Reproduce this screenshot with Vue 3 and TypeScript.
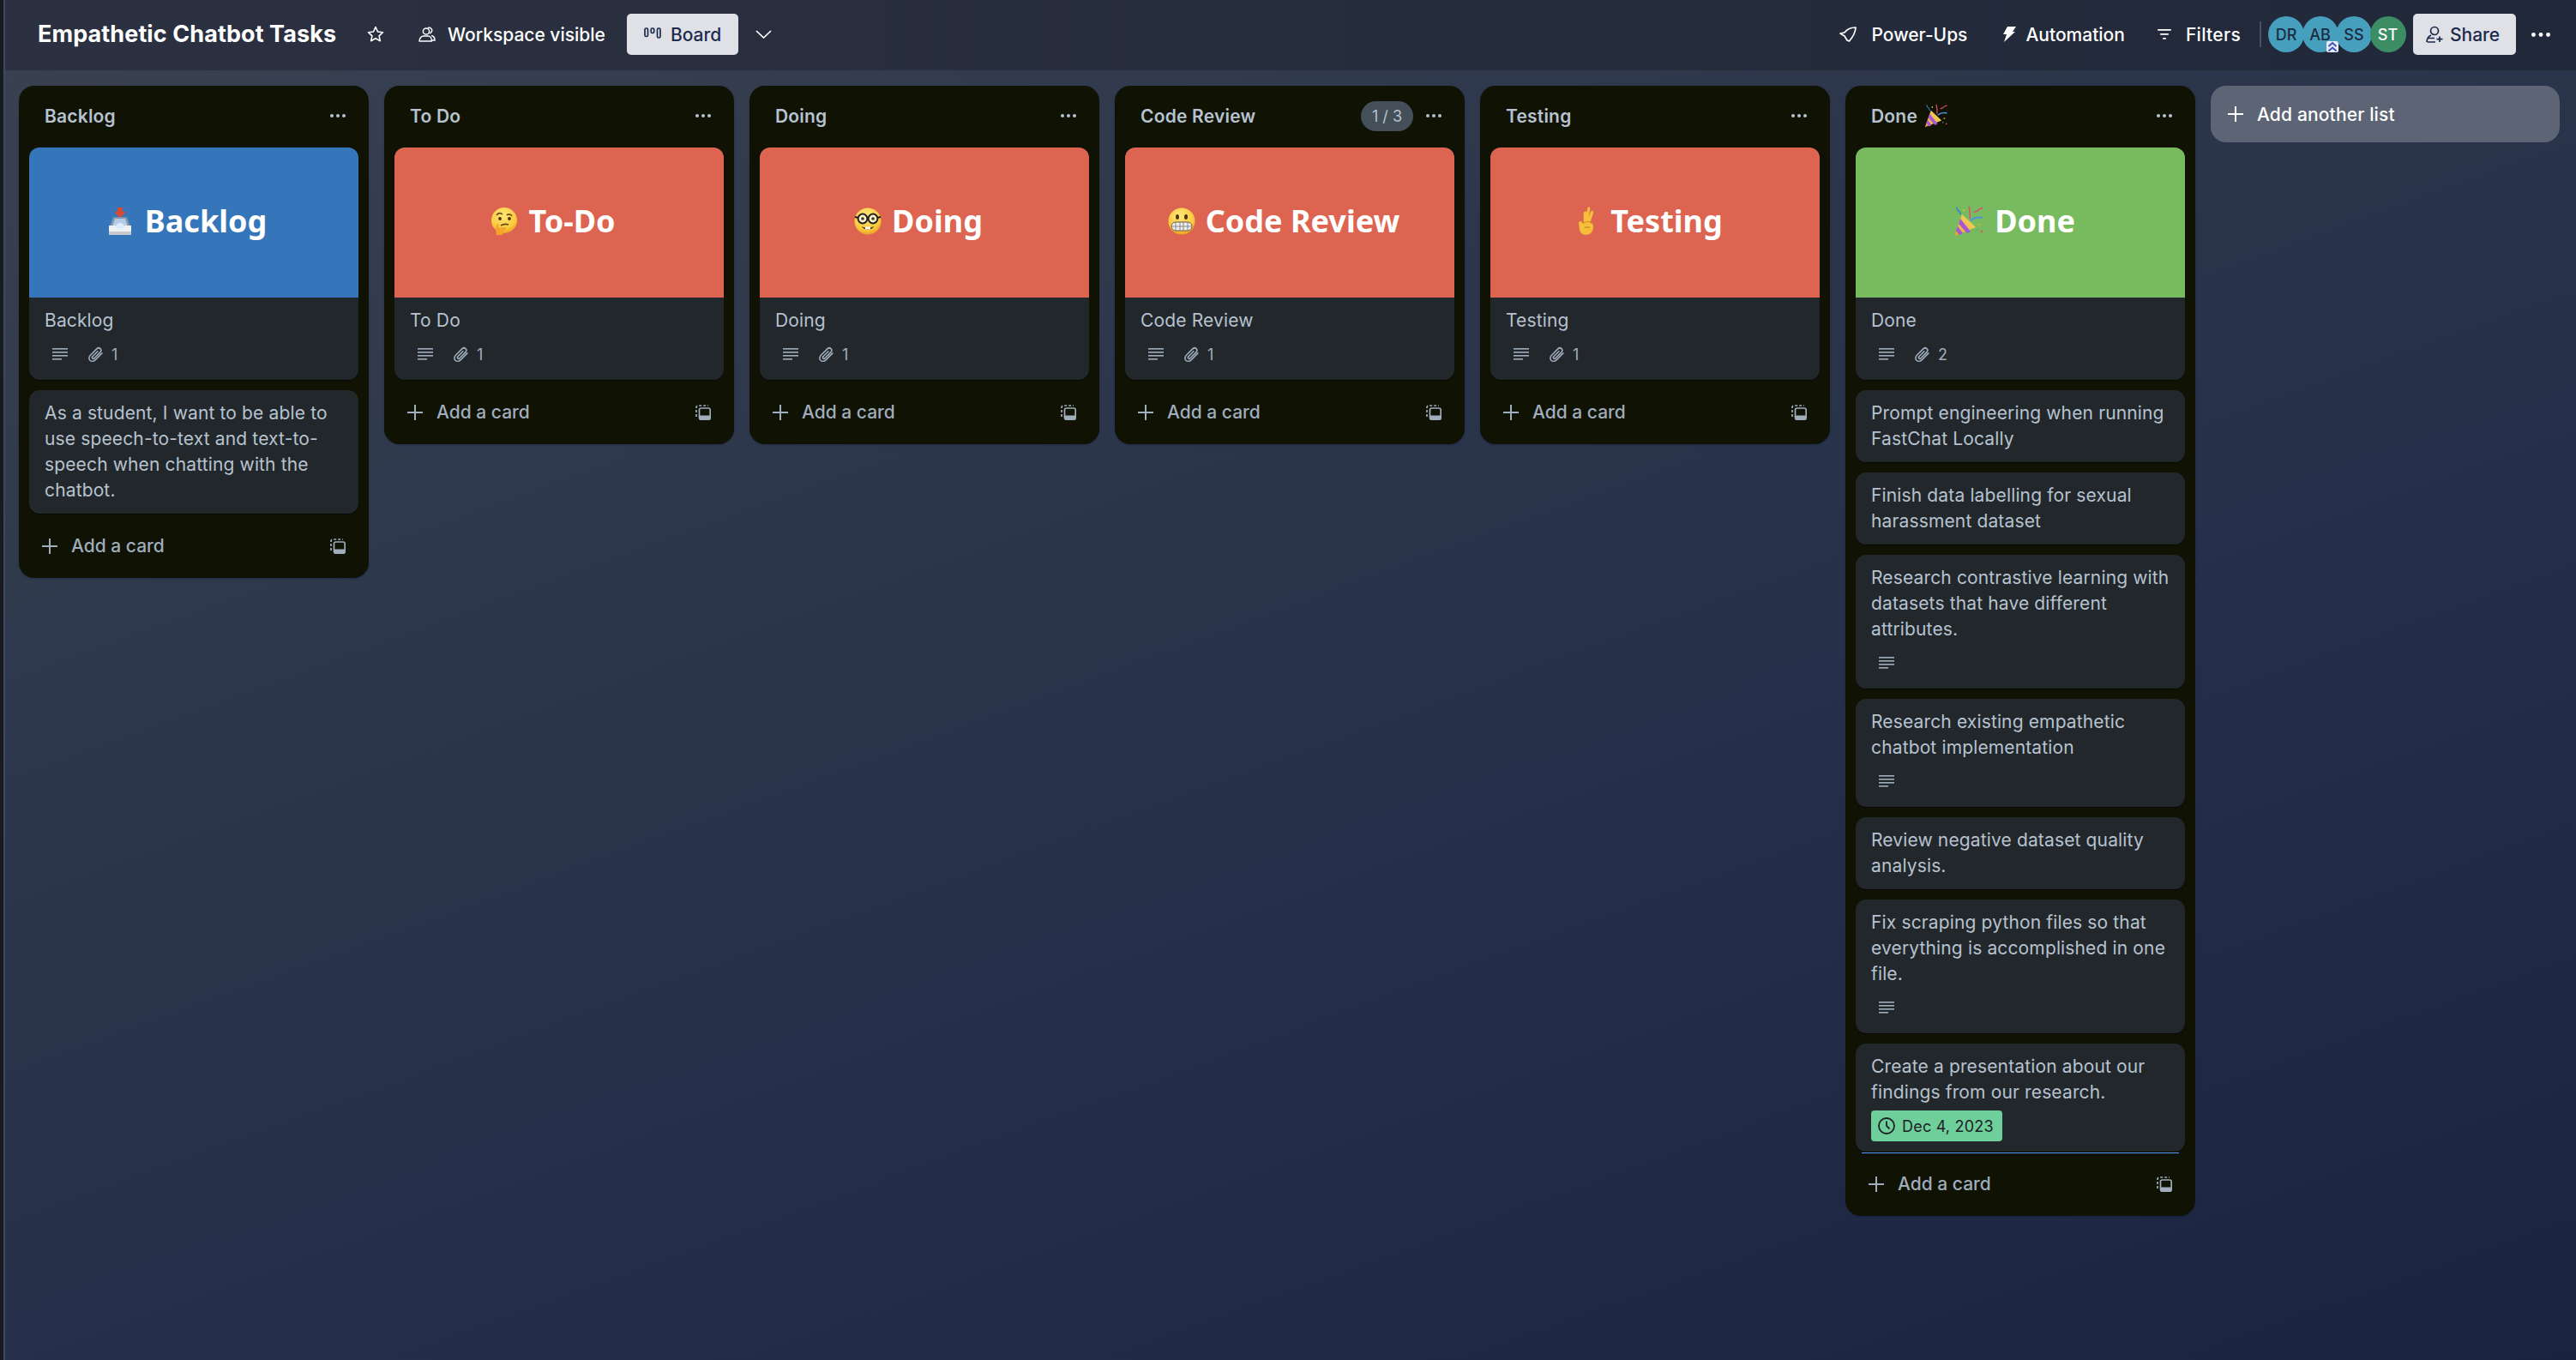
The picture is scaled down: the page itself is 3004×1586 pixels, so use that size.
<script setup lang="ts">
interface Card {
  text: string
  desc?: boolean
  attachments?: number
  date?: string
  cover?: { color: string; emoji: string; label: string }
}
interface List {
  name: string
  emoji?: string
  count?: string
  cards: Card[]
}

const RED = '#dc6450'

const lists: List[] = [
  {
    name: 'Backlog',
    cards: [
      { text: 'Backlog', desc: true, attachments: 1, cover: { color: '#3575ba', emoji: 'inbox', label: 'Backlog' } },
      { text: 'As a student, I want to be able to use speech-to-text and text-to-speech when chatting with the chatbot.' },
    ],
  },
  {
    name: 'To Do',
    cards: [{ text: 'To Do', desc: true, attachments: 1, cover: { color: RED, emoji: 'thinking', label: 'To-Do' } }],
  },
  {
    name: 'Doing',
    cards: [{ text: 'Doing', desc: true, attachments: 1, cover: { color: RED, emoji: 'nerd', label: 'Doing' } }],
  },
  {
    name: 'Code Review',
    count: '1 / 3',
    cards: [{ text: 'Code Review', desc: true, attachments: 1, cover: { color: RED, emoji: 'grimace', label: 'Code Review' } }],
  },
  {
    name: 'Testing',
    cards: [{ text: 'Testing', desc: true, attachments: 1, cover: { color: RED, emoji: 'fingers', label: 'Testing' } }],
  },
  {
    name: 'Done',
    emoji: 'party',
    cards: [
      { text: 'Done', desc: true, attachments: 2, cover: { color: '#77bb5e', emoji: 'party', label: 'Done' } },
      { text: 'Prompt engineering when running FastChat Locally' },
      { text: 'Finish data labelling for sexual harassment dataset' },
      { text: 'Research contrastive learning with datasets that have different attributes.', desc: true },
      { text: 'Research existing empathetic chatbot implementation', desc: true },
      { text: 'Review negative dataset quality analysis.' },
      { text: 'Fix scraping python files so that everything is accomplished in one file.', desc: true },
      { text: 'Create a presentation about our findings from our research.', date: 'Dec 4, 2023' },
    ],
  },
]

const members = [
  { initials: 'DR', color: '#46a0bd' },
  { initials: 'AB', color: '#46a0bd', admin: true },
  { initials: 'SS', color: '#46a0bd' },
  { initials: 'ST', color: '#3c8d63', light: true },
]
</script>

<template>
  <svg class="sprite" aria-hidden="true">
    <defs>
      <radialGradient id="face" cx="45%" cy="30%" r="75%">
        <stop offset="0" stop-color="#ffe678" />
        <stop offset="0.7" stop-color="#fbc93c" />
        <stop offset="1" stop-color="#e49a20" />
      </radialGradient>
      <linearGradient id="cone" x1="0" y1="1" x2="1" y2="0">
        <stop offset="0" stop-color="#e8a62c" />
        <stop offset="1" stop-color="#fbd96a" />
      </linearGradient>

      <symbol id="e-inbox" viewBox="0 0 26 32">
        <path d="M10 0h6v5h4l-7 7-7-7h4z" fill="#d8492f" />
        <path d="M5 11h16l4 11H1z" fill="#7f93ad" />
        <path d="M7 13h12l3 9H4z" fill="#b4cbe6" />
        <circle cx="13" cy="23" r="5" fill="#dcecff" />
        <path d="M0 21h8a5 4 0 0 0 10 0h8v10a1 1 0 0 1-1 1H1a1 1 0 0 1-1-1z" fill="#eef0f2" />
        <path d="M0 28h26v3a1 1 0 0 1-1 1H1a1 1 0 0 1-1-1z" fill="#c5c8cd" />
      </symbol>
      <symbol id="e-thinking" viewBox="0 0 32 32">
        <circle cx="16" cy="15" r="15" fill="url(#face)" />
        <path d="M7 9c2-3 5-3 7-1M19 9c2-2 5-1 6 1" stroke="#6b4a14" stroke-width="1.6" fill="none" />
        <circle cx="11" cy="13" r="1.9" fill="#4a3310" />
        <circle cx="22" cy="13" r="1.9" fill="#4a3310" />
        <path d="M12 21c3-2 6-2 9-1" stroke="#6b4a14" stroke-width="1.6" fill="none" />
        <path d="M7 32c-1-4-1-8 0-12l2-1 1 5 7-1c2 0 2 3 0 3l-2 1c1 3-1 5-4 5z" fill="#f2a42c" />
      </symbol>
      <symbol id="e-nerd" viewBox="0 0 32 32">
        <circle cx="16" cy="16" r="15.5" fill="url(#face)" />
        <circle cx="10" cy="13" r="5.4" fill="#fff3c4" stroke="#222" stroke-width="2" />
        <circle cx="22" cy="13" r="5.4" fill="#fff3c4" stroke="#222" stroke-width="2" />
        <path d="M15 12h2M1 11l4 1M27 12l4-1" stroke="#222" stroke-width="2" />
        <circle cx="10" cy="13" r="1.8" fill="#333" />
        <circle cx="22" cy="13" r="1.8" fill="#333" />
        <path d="M9 22c4 2 10 2 14 0-2 5-12 5-14 0z" fill="#5a3510" />
        <rect x="13" y="22.5" width="6" height="3" fill="#fff" />
      </symbol>
      <symbol id="e-grimace" viewBox="0 0 32 32">
        <circle cx="16" cy="16" r="15.5" fill="url(#face)" />
        <ellipse cx="11" cy="11" rx="2" ry="3" fill="#4a3310" />
        <ellipse cx="21" cy="11" rx="2" ry="3" fill="#4a3310" />
        <rect x="4" y="17" width="24" height="10" rx="5" fill="#eee" stroke="#6a5a3a" stroke-width="1" />
        <path d="M4 22h24M9 17v10M14 17v10M18 17v10M23 17v10" stroke="#888" stroke-width="1" />
      </symbol>
      <symbol id="e-fingers" viewBox="0 0 26 36">
        <path d="M15 1c2-1 4 0 3 3l-2 9 3-7c1-2 4-1 3 2l-4 12 3 1c2 3 1 11-4 13-5 2-11 0-12-6l-1-8c0-2 3-3 4-1l2 3V8c0-2 3-3 4-1z" fill="#f6be3b" />
        <path d="M10 20c3-2 8-2 10 0M11 26c3-1 5-1 7 0" stroke="#c98a1d" stroke-width="1.2" fill="none" />
      </symbol>
      <symbol id="e-party" viewBox="0 0 36 36">
        <path d="M1 35 10 10l16 15z" fill="url(#cone)" />
        <path d="M6 21l10 11 4-2L8 15zM3 29l4 5 4-2-6-8z" fill="#a557d6" />
        <path d="M18 1c1 4 2 8 1 14" stroke="#e0506e" stroke-width="1.6" fill="none" />
        <path d="M20 17c4-3 9-4 14-3" stroke="#4d8fe0" stroke-width="2" fill="none" />
        <path d="M3 2c3 1 0 3 3 4s0 3 3 4" stroke="#2c7fd6" stroke-width="1.4" fill="none" />
        <path d="M24 8c2-3 3 0 5-3s3 0 5-3" stroke="#d9506e" stroke-width="1.5" fill="none" />
        <circle cx="30" cy="22" r="1.2" fill="#e8a62c" />
        <circle cx="33" cy="30" r="1.2" fill="#e0506e" />
        <circle cx="28" cy="28" r="1" fill="#4db06a" />
        <circle cx="12" cy="5" r="1.1" fill="#e8c22c" />
      </symbol>

      <symbol id="i-star" viewBox="0 0 20 20">
        <path d="M10 1.500l2.500 5.500 6 .7-4.400 4.100 1.200 5.900-5.300-3-5.300 3 1.200-5.900L1.500 7.700l6-.7z" fill="none" stroke="currentColor" stroke-width="1.600" stroke-linejoin="round" />
      </symbol>
      <symbol id="i-people" viewBox="0 0 20 18" fill="none" stroke="currentColor" stroke-width="1.500">
        <circle cx="9" cy="5.500" r="3.600" />
        <path d="M1 17c0-3.500 2.500-6 5-6h5c2.500 0 4.500 2.500 4.500 6z" stroke-linejoin="round" />
        <path d="M11 1.500c3-1 5.500 1.500 4.500 4-.5 1.200-1.200 2-2.300 2.500M15 10.500c2.500.5 4 2.500 4 5.500h-3" />
      </symbol>
      <symbol id="i-board" viewBox="0 0 20 13" fill="none" stroke="currentColor" stroke-width="1.700">
        <rect x="1" y="1" width="3.500" height="9.500" rx="1.400" />
        <rect x="8.200" y="1" width="3.500" height="5.500" rx="1.400" />
        <rect x="15.500" y="1" width="3.500" height="11" rx="1.400" />
      </symbol>
      <symbol id="i-chevron" viewBox="0 0 19 10">
        <path d="M1 1l8.500 8L18 1" fill="none" stroke="currentColor" stroke-width="1.700" />
      </symbol>
      <symbol id="i-rocket" viewBox="0 0 20 18">
        <path d="M19 1C12.500 1 8.500 3.500 6 7L1 8l5 3 3 5 2.500 1c3-3.500 7-8 7.500-16z" fill="none" stroke="currentColor" stroke-width="1.700" stroke-linejoin="round" />
      </symbol>
      <symbol id="i-bolt" viewBox="0 0 15 18">
        <path d="M5 0h10l-4 6h3L1 18l3-9H0z" fill="currentColor" />
      </symbol>
      <symbol id="i-filter" viewBox="0 0 16 12" fill="currentColor">
        <rect x="0" y="0" width="16" height="1.700" rx=".8" />
        <rect x="3" y="5" width="10" height="1.700" rx=".8" />
        <rect x="6" y="10" width="4" height="1.700" rx=".8" />
      </symbol>
      <symbol id="i-share" viewBox="0 0 20 20" fill="none" stroke="currentColor" stroke-width="1.700">
        <circle cx="10" cy="6" r="4.500" />
        <path d="M1 19c0-3 2-6.500 5-8M10 14.500H2" />
        <path d="M1.500 19H11M16 12.500v6.500M12.500 15.700h7" />
      </symbol>
      <symbol id="i-dots" viewBox="0 0 18 4" fill="currentColor">
        <circle cx="2" cy="2" r="2" />
        <circle cx="9" cy="2" r="2" />
        <circle cx="16" cy="2" r="2" />
      </symbol>
      <symbol id="i-desc" viewBox="0 0 18 14" fill="currentColor">
        <rect width="18" height="1.600" />
        <rect y="4" width="18" height="1.600" />
        <rect y="8" width="18" height="1.600" />
        <rect y="12" width="11" height="1.600" />
      </symbol>
      <symbol id="i-clip" viewBox="0 0 18 18">
        <path d="M16 7.500 8.500 15c-1.800 1.800-4.300 1.800-5.700.4s-1.400-3.900.4-5.700l7-7c1.200-1.200 3-1.200 4-.2s1 2.800-.2 4l-6.500 6.500c-.6.600-1.500.6-2 .1s-.5-1.400.1-2l5.700-5.700" fill="none" stroke="currentColor" stroke-width="1.500" stroke-linecap="round" />
      </symbol>
      <symbol id="i-plus" viewBox="0 0 18 18">
        <path d="M9 0v18M0 9h18" stroke="currentColor" stroke-width="2" />
      </symbol>
      <symbol id="i-template" viewBox="0 0 18 18">
        <path d="M1 14V3a2 2 0 0 1 2-2h12" fill="none" stroke="currentColor" stroke-width="1.700" stroke-dasharray="3 2" />
        <rect x="4.500" y="4" width="12.700" height="13.200" rx="2" fill="none" stroke="currentColor" stroke-width="1.700" />
        <rect x="4.500" y="12.500" width="12.700" height="4.700" rx="1" fill="currentColor" />
      </symbol>
      <symbol id="i-clock" viewBox="0 0 20 20" fill="none" stroke="currentColor" stroke-width="1.800">
        <circle cx="10" cy="10" r="9" />
        <path d="M10 4.500V10l3.500 3.500" />
      </symbol>
    </defs>
  </svg>

  <div class="page">
    <div class="rail"></div>
    <main class="main">
      <header class="topbar">
        <h1 class="board-title">Empathetic Chatbot Tasks</h1>
        <svg class="ico star"><use href="#i-star" /></svg>
        <div class="top-item visibility">
          <svg class="ico people"><use href="#i-people" /></svg>
          <span>Workspace visible</span>
        </div>
        <button class="light-btn board-btn">
          <svg class="ico board-ico"><use href="#i-board" /></svg>
          <span>Board</span>
        </button>
        <svg class="ico chevron"><use href="#i-chevron" /></svg>

        <div class="top-right">
          <div class="top-item powerups">
            <svg class="ico rocket"><use href="#i-rocket" /></svg>
            <span>Power-Ups</span>
          </div>
          <div class="top-item automation">
            <svg class="ico bolt"><use href="#i-bolt" /></svg>
            <span>Automation</span>
          </div>
          <div class="top-item filters">
            <svg class="ico filter"><use href="#i-filter" /></svg>
            <span>Filters</span>
          </div>
          <div class="divider"></div>
          <div class="members">
            <div
              v-for="m in members"
              :key="m.initials"
              class="avatar"
              :class="{ 'avatar-light': m.light }"
              :style="{ background: m.color }"
            >
              {{ m.initials }}
              <span v-if="m.admin" class="admin-badge">
                <svg viewBox="0 0 14 13"><path d="M2.500 6l4.500-4 4.500 4M2.500 11.500l4.500-4 4.500 4" fill="none" stroke="#3f51c8" stroke-width="2" /></svg>
              </span>
            </div>
          </div>
          <button class="light-btn share-btn">
            <svg class="ico share"><use href="#i-share" /></svg>
            <span>Share</span>
          </button>
          <svg class="ico top-dots"><use href="#i-dots" /></svg>
        </div>
      </header>

      <section class="board">
        <div v-for="list in lists" :key="list.name" class="list">
          <div class="list-head">
            <div class="list-name">
              <span>{{ list.name }}</span>
              <svg v-if="list.emoji" class="head-emoji"><use :href="'#e-' + list.emoji" /></svg>
            </div>
            <span v-if="list.count" class="list-count">{{ list.count }}</span>
            <svg class="ico list-dots"><use href="#i-dots" /></svg>
          </div>

          <div class="cards">
            <article v-for="card in list.cards" :key="card.text" class="card">
              <div v-if="card.cover" class="cover" :style="{ background: card.cover.color }">
                <svg class="cover-emoji" :class="'em-' + card.cover.emoji"><use :href="'#e-' + card.cover.emoji" /></svg>
                <span>{{ card.cover.label }}</span>
              </div>
              <div class="card-body">
                <p class="card-text">{{ card.text }}</p>
                <div v-if="card.date" class="date-row">
                  <span class="date">
                    <svg class="ico clock"><use href="#i-clock" /></svg>
                    {{ card.date }}
                  </span>
                </div>
                <div v-if="card.desc || card.attachments" class="badges">
                  <svg v-if="card.desc" class="ico desc"><use href="#i-desc" /></svg>
                  <svg v-if="card.attachments" class="ico clip"><use href="#i-clip" /></svg>
                  <span v-if="card.attachments" class="clip-count">{{ card.attachments }}</span>
                </div>
              </div>
            </article>
            <div v-if="list.name === 'Done'" class="drop-line"></div>
          </div>

          <div class="list-foot">
            <svg class="ico plus"><use href="#i-plus" /></svg>
            <span class="add-card">Add a card</span>
            <svg class="ico template"><use href="#i-template" /></svg>
          </div>
        </div>

        <div class="add-list">
          <svg class="ico plus"><use href="#i-plus" /></svg>
          <span>Add another list</span>
        </div>
      </section>
    </main>
  </div>
</template>

<style>
html,
body {
  margin: 0;
  background: #1a2440;
}
</style>

<style scoped>
.sprite {
  position: absolute;
  width: 0;
  height: 0;
}

.page {
  display: flex;
  width: 3004px;
  height: 1586px;
  overflow: hidden;
  font-family: Inter, "Liberation Sans", sans-serif;
}

.rail {
  flex: none;
  width: 4px;
  background: #171b1f;
  border-right: 2px solid #3c4a60;
}

.main {
  flex: 1;
  min-width: 0;
  display: flex;
  flex-direction: column;
  background: linear-gradient(160deg, #3a4251 0%, #2a344a 42%, #26304a 58%, #1a2440 100%);
}

.ico {
  flex: none;
  display: block;
}

/* top bar */
.topbar {
  flex: none;
  height: 82px;
  box-sizing: border-box;
  display: flex;
  align-items: center;
  padding: 0 30px 2px 38px;
  color: #fff;
  background: linear-gradient(90deg, #2b3140 0%, #212839 100%);
}

.board-title {
  margin: 0;
  font-size: 27px;
  font-weight: 700;
  line-height: 36px;
  width: 349px;
  white-space: nowrap;
  letter-spacing: 0.08px;
}

.star {
  width: 20px;
  height: 20px;
  margin-left: 35px;
}

.top-item {
  display: flex;
  align-items: center;
  font-size: 21px;
  font-weight: 500;
  white-space: nowrap;
}

.visibility {
  margin-left: 40px;
  gap: 14px;
}

.people {
  width: 20px;
  height: 18px;
}

.light-btn {
  display: flex;
  align-items: center;
  height: 48px;
  box-sizing: border-box;
  border: 0;
  border-radius: 5px;
  background: #dfe1e6;
  color: #1c2b4d;
  font-family: inherit;
  font-size: 21px;
  font-weight: 500;
}

.board-btn {
  width: 130px;
  margin-left: 25px;
  padding: 0 0 0 20px;
  gap: 11px;
}

.board-ico {
  width: 20px;
  height: 13px;
  margin-top: -3px;
}

.chevron {
  width: 19px;
  height: 10px;
  margin-left: 20px;
}

.top-right {
  margin-left: auto;
  display: flex;
  align-items: center;
}

.powerups {
  gap: 18px;
}

.rocket {
  width: 20px;
  height: 18px;
}

.automation {
  margin-left: 42px;
  gap: 11px;
}

.bolt {
  width: 15px;
  height: 18px;
}

.filters {
  margin-left: 38px;
  gap: 17px;
  letter-spacing: 0.3px;
}

.filter {
  width: 16px;
  height: 12px;
}

.divider {
  width: 2px;
  height: 30px;
  margin: 0 8px 0 22px;
  background: #4a5163;
}

.members {
  display: flex;
}

.avatar {
  position: relative;
  width: 42px;
  height: 42px;
  margin-right: -2.5px;
  border-radius: 50%;
  display: flex;
  align-items: center;
  justify-content: center;
  color: #1c2b41;
  font-size: 18px;
  font-weight: 500;
}

.avatar-light {
  color: #fff;
}

.admin-badge {
  position: absolute;
  right: 0;
  bottom: 0;
  width: 14px;
  height: 13px;
  background: #e6ecf5;
  border-radius: 2px;
  display: flex;
}

.share-btn {
  width: 120px;
  margin-left: 11px;
  padding: 0 0 0 15px;
  gap: 8px;
}

.share {
  width: 20px;
  height: 20px;
}

.top-dots {
  width: 22px;
  height: 5px;
  margin-left: 18px;
}

/* board */
.board {
  flex: 1;
  min-height: 0;
  display: flex;
  align-items: flex-start;
  gap: 18px;
  padding: 18px 0 0 16px;
}

.list {
  flex: none;
  width: 408px;
  box-sizing: border-box;
  padding-top: 0;
  border-radius: 18px;
  background: #101204;
  box-shadow: 0 1px 2px rgba(9, 30, 66, 0.4);
  color: #b6c2cf;
}

.list-head {
  height: 72px;
  box-sizing: border-box;
  display: flex;
  align-items: center;
  padding: 0 27px 2px 30px;
}

.list-name {
  display: flex;
  align-items: center;
  gap: 8px;
  font-size: 21px;
  font-weight: 600;
  letter-spacing: 0.2px;
}

.head-emoji {
  width: 28px;
  height: 28px;
}

.list-count {
  margin-left: auto;
  width: 61px;
  height: 35px;
  border-radius: 18px;
  background: #454f59;
  color: #b6c2cf;
  font-size: 18px;
  display: flex;
  align-items: center;
  justify-content: center;
}

.list-dots {
  width: 18px;
  height: 4px;
  margin-left: auto;
}

.list-count + .list-dots {
  margin-left: 15px;
}

.cards {
  position: relative;
  display: flex;
  flex-direction: column;
  gap: 12px;
  padding: 0 12px;
}

.card {
  border-radius: 12px;
  background: #22272b;
  overflow: hidden;
  box-shadow: 0 1px 1px rgba(0, 0, 0, 0.5);
}

.cover {
  height: 175px;
  box-sizing: border-box;
  display: flex;
  align-items: center;
  justify-content: center;
  gap: 12px;
  padding: 0 14px 4px 0;
  color: #fff;
  font-family: "Noto Sans", Inter, sans-serif;
  font-size: 36px;
  font-weight: 700;
}

.cover-emoji {
  flex: none;
  width: 32px;
  height: 32px;
}

.em-inbox {
  width: 26px;
  margin-right: 4px;
}

.em-fingers {
  width: 25px;
  height: 34px;
  margin-right: 4px;
}

.em-party {
  width: 36px;
  height: 36px;
}

.card-body {
  padding: 12px 18px;
}

.card-text {
  margin: 0;
  font-size: 21px;
  line-height: 30px;
  font-weight: 400;
  letter-spacing: 0.14px;
}

.date-row {
  margin-top: 6px;
  display: flex;
}

.date {
  height: 36px;
  width: 153px;
  box-sizing: border-box;
  display: flex;
  align-items: center;
  gap: 8px;
  padding-left: 8px;
  border-radius: 4px;
  background: #6fcf9b;
  color: #1d2125;
  font-size: 18px;
  letter-spacing: 0.2px;
}

.clock {
  width: 20px;
  height: 20px;
}

.badges {
  display: flex;
  align-items: center;
  height: 36px;
  margin-top: 6px;
  padding-left: 9px;
  color: #9fadbc;
}

.desc {
  width: 18px;
  height: 14px;
}

.clip {
  width: 19px;
  height: 19px;
  margin-left: 23px;
}

.clip-count {
  margin-left: 9px;
  font-size: 18px;
}

.drop-line {
  position: absolute;
  left: 19px;
  right: 19px;
  bottom: -2px;
  height: 1.5px;
  background: #579dff;
}

.list-foot {
  height: 75px;
  box-sizing: border-box;
  display: flex;
  align-items: center;
  padding: 0 27px 0 27px;
  color: #9fadbc;
}

.plus {
  width: 18px;
  height: 18px;
}

.add-card {
  margin-left: 16px;
  font-size: 21px;
  font-weight: 500;
}

.template {
  width: 18px;
  height: 18px;
  margin-left: auto;
}

.add-list {
  flex: none;
  width: 407px;
  height: 66px;
  box-sizing: border-box;
  display: flex;
  align-items: center;
  gap: 16px;
  padding-left: 20px;
  border-radius: 18px;
  background: #5d6475;
  color: #fff;
  font-size: 21px;
  font-weight: 500;
  letter-spacing: 0.15px;
}
</style>
